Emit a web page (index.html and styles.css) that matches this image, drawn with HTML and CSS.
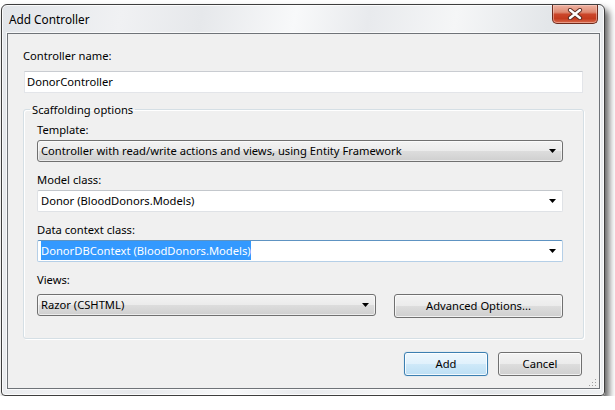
FILE: index.html
```html
<!DOCTYPE html>
<html>
<head>
<meta charset="utf-8">
<link rel="stylesheet" href="styles.css">
</head>
<body>
<div class="window">
  <div class="titlebar">
    <span class="title">Add Controller</span>
    <div class="close">
      <svg width="16" height="12" viewBox="0 0 16 12">
        <path d="M3 2 L13 10 M13 2 L3 10" stroke="#5a2a20" stroke-width="4.2" stroke-linecap="round"/>
        <path d="M3 2 L13 10 M13 2 L3 10" stroke="#ffffff" stroke-width="2.4" stroke-linecap="round"/>
      </svg>
    </div>
  </div>
  <div class="client">
    <div class="label">Controller name:</div>
    <div class="textbox">DonorController</div>
    <fieldset class="group">
      <legend>Scaffolding options</legend>
      <div class="label">Template:</div>
      <div class="combo combo-btn">
        <span class="combo-text">Controller with read/write actions and views, using Entity Framework</span>
        <svg class="arrow" width="7" height="4" viewBox="0 0 7 4"><polygon points="0,0 7,0 3.5,4" fill="#000"/></svg>
      </div>
      <div class="label">Model class:</div>
      <div class="combo combo-edit">
        <span class="combo-text">Donor (BloodDonors.Models)</span>
        <svg class="arrow" width="7" height="4" viewBox="0 0 7 4"><polygon points="0,0 7,0 3.5,4" fill="#000"/></svg>
      </div>
      <div class="label">Data context class:</div>
      <div class="combo combo-edit focused">
        <span class="combo-text"><span class="selected">DonorDBContext (BloodDonors.Models)</span></span>
        <svg class="arrow" width="7" height="4" viewBox="0 0 7 4"><polygon points="0,0 7,0 3.5,4" fill="#000"/></svg>
      </div>
      <div class="label views-label">Views:</div>
      <div class="views-row">
        <div class="combo combo-btn views-combo">
          <span class="combo-text">Razor (CSHTML)</span>
          <svg class="arrow" width="7" height="4" viewBox="0 0 7 4"><polygon points="0,0 7,0 3.5,4" fill="#000"/></svg>
        </div>
        <div class="btn adv">Advanced Options...</div>
      </div>
    </fieldset>
    <div class="actions">
      <div class="btn default">Add</div>
      <div class="btn">Cancel</div>
    </div>
    <svg class="grip" width="9" height="9" viewBox="0 0 9 9">
      <rect x="7" y="1" width="1" height="1" fill="#a0a0a0"/>
      <rect x="4" y="4" width="1" height="1" fill="#a0a0a0"/>
      <rect x="7" y="4" width="1" height="1" fill="#a0a0a0"/>
      <rect x="1" y="7" width="1" height="1" fill="#a0a0a0"/>
      <rect x="4" y="7" width="1" height="1" fill="#a0a0a0"/>
      <rect x="7" y="7" width="1" height="1" fill="#a0a0a0"/>
    </svg>
  </div>
</div>
</body>
</html>
```
FILE: styles.css
```css
html, body {
  margin: 0;
  padding: 0;
  background: #ffffff;
}
body {
  font-family: "Noto Sans", "Open Sans", sans-serif;
  font-size: 11.2px;
  color: #000;
}
.window {
  margin: 4px 0 0 1px;
  width: 602px;
  height: 390px;
  border: 1px solid #3e3e3e;
  border-radius: 6px 6px 4px 4px;
  background: linear-gradient(100deg, #e2e5e9 0%, #f0f1f3 18%, #e6e8eb 30%, #f8f9fa 44%, #e8eaed 55%, #f5f6f7 68%, #e3e6e9 82%, #eef0f2 100%);
  box-shadow: 4px 5px 7px rgba(0, 0, 0, 0.62), inset 0 0 0 1px rgba(255, 255, 255, 0.8);
  display: flex;
  flex-direction: column;
}
.titlebar {
  height: 28px;
  display: flex;
  align-items: center;
  padding-left: 7px;
  flex: 0 0 auto;
}
.title {
  font-size: 11.8px;
  line-height: 15px;
  color: #000;
}
.close {
  margin-left: auto;
  margin-right: 6px;
  align-self: flex-start;
  width: 44px;
  height: 18px;
  border: 1px solid #6e2a1c;
  border-top: none;
  border-radius: 0 0 5px 5px;
  background: linear-gradient(#eeb2a2 0%, #de8a72 40%, #cb462a 52%, #c43b1e 75%, #d8694c 100%);
  box-shadow: inset 0 0 0 1px rgba(255, 220, 210, 0.45);
  display: flex;
  align-items: center;
  justify-content: center;
}
.client {
  position: relative;
  flex: 1 1 auto;
  margin: 0 4px 6px 5px;
  border: 1px solid #6f7378;
  background: #f0f0f0;
  padding: 14px 15px 0 15px;
  box-shadow: 0 0 0 1px rgba(255, 255, 255, 0.7);
}
.label {
  line-height: 15px;
  height: 15px;
  margin-bottom: 3px;
}
.client > .label {
  margin-bottom: 8px;
}
.textbox {
  margin: 0 1px 9px 1px;
  height: 20px;
  line-height: 20px;
  padding-left: 2px;
  background: #fff;
  border: 1px solid #e3e5e9;
  border-top-color: #c9ccd1;
}
.group {
  margin: 0;
  padding: 5px 20px 20px 13px;
  border: 1px solid #d5dfe5;
  border-radius: 3px;
  box-shadow: inset 1px 1px 0 #ffffff, 1px 1px 0 #ffffff;
}
.group legend {
  margin-left: -7px;
  padding: 0 2px;
  line-height: 15px;
}
.combo {
  position: relative;
  height: 20px;
  line-height: 20px;
  margin-bottom: 10px;
  border-radius: 2px;
  display: flex;
  align-items: center;
  padding-left: 3px;
}
.combo-text {
  flex: 1 1 auto;
  white-space: nowrap;
}
.combo .arrow {
  margin-right: 6px;
  flex: 0 0 auto;
}
.combo-btn {
  border: 1px solid #707070;
  border-radius: 3px;
  background: linear-gradient(#f3f3f3 0%, #ebebeb 50%, #dddddd 50%, #cfcfcf 100%);
  box-shadow: inset 0 0 0 1px rgba(255, 255, 255, 0.6);
}
.combo-edit {
  border: 1px solid #dfe2e6;
  border-top-color: #c3c7cc;
  background: #fff;
}
.combo-edit.focused {
  border-color: #b5cfe7;
  border-top-color: #5e93c2;
}
.selected {
  background: #3399ff;
  color: #fff;
  padding: 2px 0 2px 0;
}
.views-label {
  margin-bottom: 7px;
}
.views-row {
  display: flex;
  align-items: flex-start;
}
.views-combo {
  flex: 0 0 auto;
  width: 334px;
  margin-bottom: 0;
}
.btn {
  height: 22px;
  line-height: 22px;
  border: 1px solid #707070;
  border-radius: 3px;
  background: linear-gradient(#f3f3f3 0%, #ebebeb 50%, #dddddd 50%, #cfcfcf 100%);
  box-shadow: inset 0 0 0 1px rgba(255, 255, 255, 0.7);
  text-align: center;
}
.adv {
  margin-left: auto;
  width: 167px;
}
.actions {
  display: flex;
  justify-content: flex-end;
  gap: 10px;
  margin-top: 13px;
  padding-right: 2px;
}
.actions .btn {
  width: 82px;
}
.btn.default {
  border-color: #3c7fb1;
  background: linear-gradient(#eef7fd 0%, #e0f1fc 50%, #cfe9f9 50%, #bddff4 100%);
  box-shadow: inset 0 0 0 1px rgba(255, 255, 255, 0.8), 0 0 1px #7fbfe6;
}
.grip {
  position: absolute;
  right: 2px;
  bottom: 1px;
}
```
